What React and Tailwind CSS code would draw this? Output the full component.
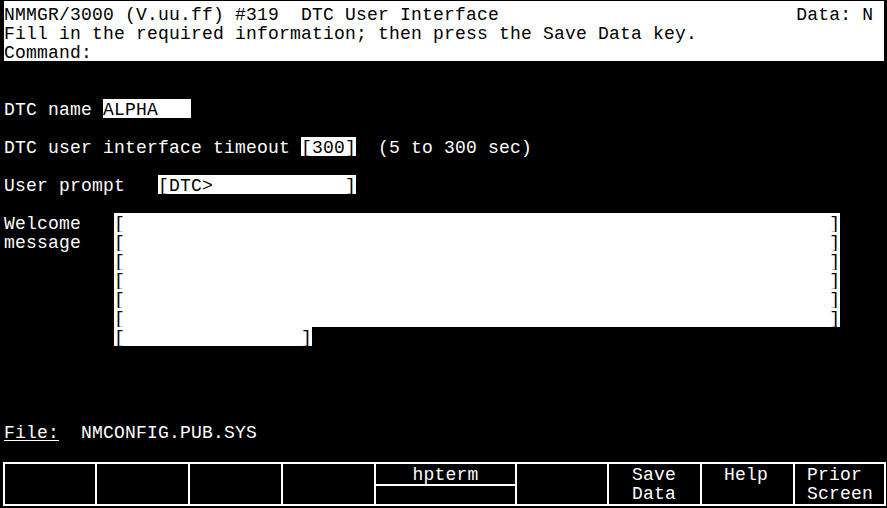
import React from 'react';

// HP terminal screen: 80 columns x 24 rows, 11px x 19px cells, then the softkey bar
const FIELD = ' '.repeat(64);
const SHORT = ' '.repeat(16);
const INDENT = ' '.repeat(10);

function Row({ children }) {
  return <div className="flex h-[19px] whitespace-pre">{children}</div>;
}

function Txt({ children }) {
  return <span>{children}</span>;
}

function Inv({ children }) {
  return <span className="bg-white text-black">{children}</span>;
}

function Key({ width, pad, lines = [] }) {
  return (
    <div className={`${width} ${pad} border-l-2 border-white h-full flex flex-col whitespace-pre`}>
      {lines.map((l) => (
        <div key={l} className="h-[19px]">{l}</div>
      ))}
    </div>
  );
}

export default function App() {
  return (
    <div className="w-[887px] h-[508px] bg-black text-white overflow-hidden pt-[1px] font-['Liberation_Mono',monospace] text-[18px] tracking-[0.2px] leading-[23px]">
      {/* Header block, inverse video */}
      <div className="ml-[4px] w-[880px] bg-white text-black pt-[3px]">
        <Row>{'NMMGR/3000 (V.uu.ff) #319  DTC User Interface'.padEnd(72) + 'Data: N'}</Row>
        <Row>Fill in the required information; then press the Save Data key.</Row>
        <Row>Command:</Row>
      </div>

      {/* Form body, rows 3–23 */}
      <div className="pl-[4px]">
        <Row />
        <Row />
        <Row>
          <Txt>{'DTC name '}</Txt>
          <Inv>{'ALPHA   '}</Inv>
        </Row>
        <Row />
        <Row>
          <Txt>{'DTC user interface timeout '}</Txt>
          <Inv>[300]</Inv>
          <Txt>{'  (5 to 300 sec)'}</Txt>
        </Row>
        <Row />
        <Row>
          <Txt>{'User prompt   '}</Txt>
          <Inv>{'[DTC>            ]'}</Inv>
        </Row>
        <Row />
        <Row>
          <Txt>{'Welcome   '}</Txt>
          <Inv>{'[' + FIELD + ']'}</Inv>
        </Row>
        <Row>
          <Txt>{'message   '}</Txt>
          <Inv>{'[' + FIELD + ']'}</Inv>
        </Row>
        {[0, 1, 2, 3].map((i) => (
          <Row key={i}>
            <Txt>{INDENT}</Txt>
            <Inv>{'[' + FIELD + ']'}</Inv>
          </Row>
        ))}
        <Row>
          <Txt>{INDENT}</Txt>
          <Inv>{'[' + SHORT + ']'}</Inv>
        </Row>
        <Row />
        <Row />
        <Row />
        <Row />
        <Row>
          <span className="underline decoration-[1px] underline-offset-[2px]">File:</span>
          <Txt>{'  NMCONFIG.PUB.SYS'}</Txt>
        </Row>
        <Row />
      </div>

      {/* Softkey labels */}
      <div className="mt-[2px] ml-[3px] w-[883px] h-[44px] border-2 border-white flex">
        <div className="w-[90px] h-full" />
        <Key width="w-[93px]" />
        <Key width="w-[93px]" />
        <Key width="w-[93px]" />
        <div className="w-[141px] h-full border-l-2 border-white flex flex-col">
          <div className="h-[20px] border-b-2 border-white box-content text-center">hpterm</div>
          <div className="flex-1" />
        </div>
        <Key width="w-[92px]" />
        <Key width="w-[93px]" pad="pl-[23px]" lines={['Save', 'Data']} />
        <Key width="w-[93px]" pad="pl-[22px]" lines={['Help']} />
        <Key width="w-[91px]" pad="pl-[12px]" lines={['Prior', 'Screen']} />
      </div>
    </div>
  );
}
